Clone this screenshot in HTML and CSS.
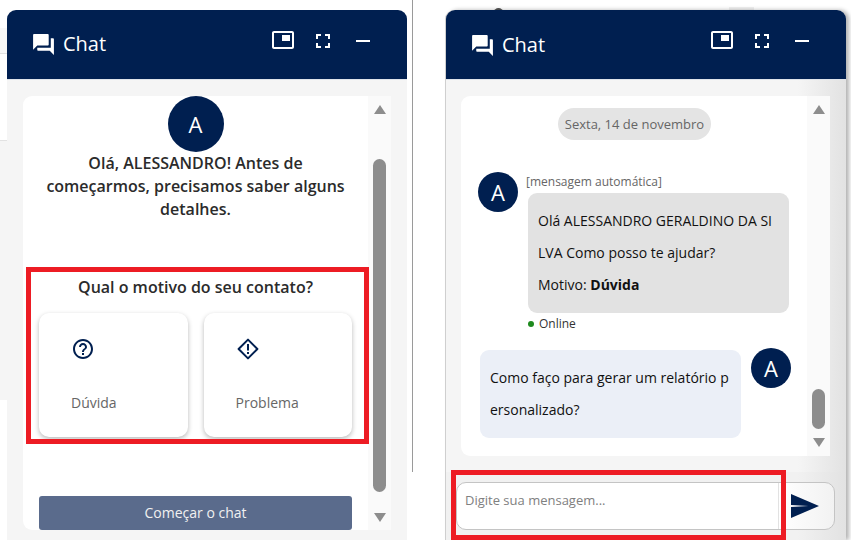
FILE: index.html
```html
<!DOCTYPE html>
<html lang="pt-BR">
<head>
  <meta charset="utf-8">
  <title>Chat</title>
  <link rel="stylesheet" href="styles.css">
</head>
<body>
  <div class="behind behind-arc"></div>
  <div class="behind behind-block"></div>

  <div class="page">
    <div class="gutter">
      <div class="gutter-top"></div>
      <div class="gutter-mid"></div>
      <div class="gutter-low"></div>
    </div>

    <section class="panel">
      <header class="panel-head">
        <svg class="chat-icon" viewBox="0 0 24 24"><path d="M21 6h-2v9H6v2c0 .55.45 1 1 1h11l4 4V7c0-.55-.45-1-1-1zm-4 6V3c0-.55-.45-1-1-1H3c-.55 0-1 .45-1 1v14l4-4h10c.55 0 1-.45 1-1z"/></svg>
        <span class="panel-title">Chat</span>
        <div class="head-actions">
          <svg class="pip-icon" viewBox="0 0 24 24"><path d="M19 7h-8v6h8V7zm2-4H3c-1.1 0-2 .9-2 2v14c0 1.1.9 1.98 2 1.98h18c1.1 0 2-.88 2-1.98V5c0-1.1-.9-2-2-2zm0 16.01H3V4.98h18v14.03z"/></svg>
          <svg viewBox="0 0 24 24"><path d="M7 14H5v5h5v-2H7v-3zm-2-4h2V7h3V5H5v5zm12 7h-3v2h5v-5h-2v3zM14 5v2h3v3h2V5h-5z"/></svg>
          <svg viewBox="0 0 24 24"><path d="M5 11h14v2H5z"/></svg>
        </div>
      </header>
      <div class="panel-body">
        <div class="card card-start">
          <div class="start-content">
            <div class="avatar avatar-big">A</div>
            <p class="greeting">Olá, ALESSANDRO! Antes de começarmos, precisamos saber alguns detalhes.</p>
            <h3 class="reason-title">Qual o motivo do seu contato?</h3>
            <div class="reasons">
              <div class="reason">
                <svg class="reason-icon" viewBox="0 0 24 24"><path d="M11 18h2v-2h-2v2zm1-16C6.48 2 2 6.48 2 12s4.48 10 10 10 10-4.48 10-10S17.52 2 12 2zm0 18c-4.41 0-8-3.59-8-8s3.59-8 8-8 8 3.59 8 8-3.59 8-8 8zm0-14c-2.21 0-4 1.79-4 4h2c0-1.1.9-2 2-2s2 .9 2 2c0 2-3 1.75-3 5h2c0-2.25 3-2.5 3-5 0-2.21-1.79-4-4-4z"/></svg>
                <span>Dúvida</span>
              </div>
              <div class="reason">
                <svg class="reason-icon" viewBox="0 0 24 24"><path d="M12 2.6 21.4 12 12 21.4 2.6 12z" class="diamond"/><path d="M11 7h2v6.5h-2zM11 15h2v2h-2z"/></svg>
                <span>Problema</span>
              </div>
            </div>
            <button class="start-btn">Começar o chat</button>
          </div>
          <div class="scroll">
            <div class="arrow-up"></div>
            <div class="thumb thumb-long"></div>
            <div class="arrow-down"></div>
          </div>
        </div>
      </div>
    </section>

    <div class="divider"></div>

    <section class="panel panel-right">
      <header class="panel-head">
        <svg class="chat-icon" viewBox="0 0 24 24"><path d="M21 6h-2v9H6v2c0 .55.45 1 1 1h11l4 4V7c0-.55-.45-1-1-1zm-4 6V3c0-.55-.45-1-1-1H3c-.55 0-1 .45-1 1v14l4-4h10c.55 0 1-.45 1-1z"/></svg>
        <span class="panel-title">Chat</span>
        <div class="head-actions">
          <svg class="pip-icon" viewBox="0 0 24 24"><path d="M19 7h-8v6h8V7zm2-4H3c-1.1 0-2 .9-2 2v14c0 1.1.9 1.98 2 1.98h18c1.1 0 2-.88 2-1.98V5c0-1.1-.9-2-2-2zm0 16.01H3V4.98h18v14.03z"/></svg>
          <svg viewBox="0 0 24 24"><path d="M7 14H5v5h5v-2H7v-3zm-2-4h2V7h3V5H5v5zm12 7h-3v2h5v-5h-2v3zM14 5v2h3v3h2V5h-5z"/></svg>
          <svg viewBox="0 0 24 24"><path d="M5 11h14v2H5z"/></svg>
        </div>
      </header>
      <div class="panel-body panel-body-chat">
        <div class="card card-chat">
          <div class="messages">
            <div class="date-pill">Sexta, 14 de novembro</div>
            <div class="msg-in">
              <div class="avatar">A</div>
              <div class="msg-col">
                <div class="auto-label">[mensagem automática]</div>
                <div class="bubble bubble-in">
                  <p>Olá ALESSANDRO GERALDINO DA SI<br>LVA Como posso te ajudar?</p>
                  <p>Motivo: <b>Dúvida</b></p>
                </div>
                <div class="status"><i class="dot"></i>Online</div>
              </div>
            </div>
            <div class="msg-out">
              <div class="bubble bubble-out">
                <p>Como faço para gerar um relatório p<br>ersonalizado?</p>
              </div>
              <div class="avatar">A</div>
            </div>
          </div>
          <div class="scroll">
            <div class="arrow-up"></div>
            <div class="thumb thumb-short"></div>
            <div class="arrow-down"></div>
          </div>
        </div>
        <div class="composer">
          <div class="input-box">
            <div class="input-text">Digite sua mensagem...</div>
            <svg class="send-icon" viewBox="2 3 21 18" preserveAspectRatio="none"><path d="M2 3 23 12 2 21V12.7L15 12 2 11.3z"/></svg>
          </div>
        </div>
      </div>
    </section>
  </div>

  <div class="mark mark-reasons"></div>
  <div class="mark mark-input"></div>
</body>
</html>
```

FILE: styles.css
```css
html, body {
  margin: 0;
  height: 100%;
}

body {
  font-family: "Open Sans", Arial, sans-serif;
  background-color: #fff;
  overflow: hidden;
}

p, h3 {
  margin: 0;
}

.page {
  display: flex;
  height: 540px;
}

/* bits of the page behind the right chat window */
.behind {
  position: absolute;
}

.behind-arc {
  left: 494px;
  top: 8px;
  width: 9px;
  height: 9px;
  border-radius: 50%;
  background-color: #555;
}

.behind-block {
  left: 729px;
  top: 7px;
  width: 25px;
  height: 6px;
  background-color: #f0f0f0;
}

.gutter {
  width: 7px;
  flex-shrink: 0;
  display: flex;
  flex-direction: column;
}

.gutter-top {
  height: 25px;
  margin-top: 28px;
  background-color: #f8f8f8;
  border-bottom: 1px solid #e2e2e2;
}

.gutter-mid {
  height: 86px;
  border-bottom: 1px solid #e2e2e2;
}

.gutter-low {
  height: 259px;
  background-color: #f5f5f5;
}

.divider {
  width: 39px;
  flex-shrink: 0;
  box-sizing: border-box;
  margin-left: 5px;
  height: 472px;
  border-left: 1px solid #9a9a9a;
}

.panel {
  width: 400px;
  flex-shrink: 0;
  margin-top: 10px;
  display: flex;
  flex-direction: column;
  border-radius: 9px 9px 0 0;
  overflow: hidden;
  position: relative;
}

.panel-right {
  margin-left: -5px;
  width: 400px;
  box-shadow: -1px 0 0 #cfcfcf, 3px 0 4px rgba(0, 0, 0, 0.3);
}

.panel-head {
  height: 70px;
  flex-shrink: 0;
  box-sizing: border-box;
  padding: 0 32px 0 24px;
  display: flex;
  align-items: flex-start;
  background-color: #001f50;
  border-bottom: 1px solid #dfe3ea;
  color: #fff;
}

.panel-head svg {
  fill: #fff;
  width: 24px;
  height: 24px;
}

.panel-head .chat-icon {
  width: 25px;
  height: 25px;
  margin-top: 22px;
}

.panel-title {
  font-size: 20px;
  line-height: 28px;
  margin: 20px 0 0 7px;
}

.panel-right .chat-icon {
  margin-top: 23px;
}

.panel-right .panel-title {
  margin-top: 21px;
}

.head-actions {
  margin-left: auto;
  margin-top: 19px;
  display: flex;
  gap: 16px;
}

.panel-head .pip-icon {
  margin-top: -1px;
}

.panel-body {
  flex: 1;
  background-color: #f5f5f5;
  padding: 16px 16px 0;
}

.panel-body-chat {
  padding: 16px 0 0;
  background: linear-gradient(to right, #f5f5f5 88%, #e2e2e2 100%);
}

.card {
  display: flex;
  background-color: #fff;
  border-radius: 9px 0 0 9px;
}

.card-start {
  height: 434px;
}

.card-chat {
  height: 360px;
  margin: 0 16px 0 15px;
}

.scroll {
  width: 23px;
  flex-shrink: 0;
  display: flex;
  flex-direction: column;
  align-items: center;
  background-color: #fafafa;
}

.arrow-up,
.arrow-down {
  width: 0;
  height: 0;
  border-left: 6px solid transparent;
  border-right: 6px solid transparent;
}

.arrow-up {
  margin-top: 9px;
  border-bottom: 9px solid #8d8d8d;
}

.arrow-down {
  border-top: 9px solid #8d8d8d;
}

.thumb {
  width: 13px;
  border-radius: 7px;
  background-color: #8d8d8d;
}

.thumb-long {
  height: 333px;
  margin: 45px 0 21px;
}

.thumb-short {
  height: 40px;
  margin: 275px 0 9px;
}

.start-content {
  flex: 1;
  padding: 0 16px;
  display: flex;
  flex-direction: column;
  align-items: center;
}

.avatar {
  width: 40px;
  height: 40px;
  flex-shrink: 0;
  border-radius: 50%;
  background-color: #001f50;
  color: #fff;
  font-size: 22px;
  display: flex;
  align-items: center;
  justify-content: center;
}

.avatar-big {
  width: 56px;
  height: 56px;
}

.greeting {
  font-size: 16px;
  font-weight: 600;
  line-height: 23px;
  color: #2b2b2b;
  text-align: center;
  width: 305px;
}

.reason-title {
  margin-top: 55px;
  font-size: 16px;
  font-weight: 600;
  line-height: 22px;
  color: #2b2b2b;
}

.reasons {
  margin-top: 15px;
  align-self: stretch;
  display: flex;
  gap: 16px;
}

.reason {
  flex: 1;
  height: 124px;
  box-sizing: border-box;
  padding: 24px 32px 0;
  border-radius: 10px;
  background-color: #fff;
  box-shadow: 0 2px 5px rgba(0, 0, 0, 0.28);
  color: #666;
  font-size: 14px;
  display: flex;
  flex-direction: column;
}

.reason-icon {
  width: 24px;
  height: 24px;
  fill: #001f50;
}

.diamond {
  fill: none;
  stroke: #001f50;
  stroke-width: 2;
  stroke-linejoin: round;
}

.reason span {
  margin-top: 32px;
  line-height: 20px;
}

.start-btn {
  margin-top: 59px;
  align-self: stretch;
  height: 34px;
  padding: 0 0 2px;
  border: none;
  border-radius: 3px;
  background-color: #5a6b8c;
  color: #f1f1f1;
  font-family: inherit;
  font-size: 14px;
  font-weight: 500;
}

.messages {
  flex: 1;
  min-width: 0;
  padding: 12px 16px 0 17px;
  display: flex;
  flex-direction: column;
}

.date-pill {
  align-self: center;
  height: 32px;
  padding: 0 7px;
  line-height: 32px;
  border-radius: 16px;
  background-color: #e4e4e4;
  color: #666;
  font-size: 13px;
}

.msg-in {
  margin-top: 32px;
  display: flex;
  gap: 8px;
}

.msg-col {
  flex: 1;
  min-width: 0;
}

.auto-label {
  font-size: 12px;
  line-height: 19px;
  padding-bottom: 2px;
  color: #666;
}

.bubble {
  box-sizing: border-box;
  width: 261px;
  padding: 12px 10px;
  border-radius: 9px;
  font-size: 14px;
  line-height: 32px;
  color: #111;
}

.bubble-in {
  margin-left: 2px;
  background-color: #e2e2e2;
}

.bubble-out {
  background-color: #ebeff7;
}

.status {
  margin-top: 3px;
  margin-left: 2px;
  font-size: 12px;
  line-height: 16px;
  color: #333;
  display: flex;
  align-items: center;
}

.dot {
  width: 6px;
  height: 6px;
  border-radius: 50%;
  background-color: #1e8a1e;
  margin-right: 5px;
}

.msg-out {
  margin-top: 18px;
  margin-left: 2px;
  display: flex;
  gap: 10px;
  align-items: flex-start;
}

.msg-out .avatar {
  margin-top: -2px;
}

.composer {
  margin-top: 16px;
  padding: 10px 11px 0 10px;
  height: 68px;
  box-sizing: border-box;
  background: linear-gradient(to right, #f1f1f1 88%, #e2e2e2 100%);
}

.input-box {
  height: 48px;
  box-sizing: border-box;
  border: 1px solid #c4c4c4;
  border-radius: 10px;
  background: linear-gradient(to right, #fff 85%, #f2f2f2 100%);
  display: flex;
  align-items: center;
}

.input-text {
  width: 322px;
  height: 46px;
  box-sizing: border-box;
  padding: 7px 8px 0;
  border-right: 1px solid #e2e2e2;
  font-size: 13px;
  line-height: 20px;
  color: #808080;
}

.send-icon {
  width: 28px;
  height: 24px;
  margin-left: 12px;
  fill: #001f50;
}

/* red annotation boxes drawn over the screenshot */
.mark {
  position: absolute;
  box-sizing: border-box;
  border: 5px solid #ed1c24;
}

.mark-reasons {
  left: 26px;
  top: 267px;
  width: 343px;
  height: 177px;
}

.mark-input {
  left: 451px;
  top: 470px;
  width: 335px;
  height: 70px;
}
```
